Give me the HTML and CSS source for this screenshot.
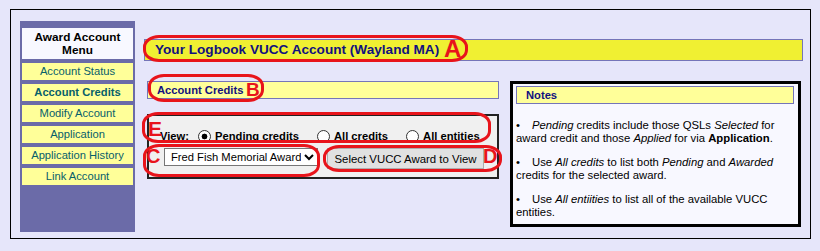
FILE: index.html
```html
<!DOCTYPE html>
<html>
<head>
<meta charset="utf-8">
<title>Logbook VUCC Account</title>
<link rel="stylesheet" href="styles.css">
</head>
<body>
<div class="frame">
  <nav class="sidebar">
    <div class="menu-title">Award Account<br>Menu</div>
    <a class="menu-item">Account Status</a>
    <a class="menu-item current">Account Credits</a>
    <a class="menu-item">Modify Account</a>
    <a class="menu-item">Application</a>
    <a class="menu-item">Application History</a>
    <a class="menu-item">Link Account</a>
  </nav>
  <main class="content">
    <h1 class="page-title">Your Logbook VUCC Account (Wayland MA)</h1>
    <div class="row">
      <div class="left-col">
        <h2 class="section-title">Account Credits</h2>
        <form class="view-form">
          <div class="view-row">
            <span class="view-label">View:</span>
            <label class="opt opt-first"><input type="radio" name="v" checked>Pending credits</label>
            <label class="opt"><input type="radio" name="v">All credits</label>
            <label class="opt"><input type="radio" name="v">All entities</label>
          </div>
          <div class="select-row">
            <select class="award-select"><option>Fred Fish Memorial Award</option></select>
            <button type="button" class="award-btn">Select VUCC Award to View</button>
          </div>
        </form>
      </div>
      <aside class="notes">
        <div class="notes-title">Notes</div>
        <p><span class="bullet">&bull;</span><i>Pending</i> credits include those QSLs <i>Selected</i> for award credit and those <i>Applied</i> for via <b>Application</b>.</p>
        <p><span class="bullet">&bull;</span>Use <i>All credits</i> to list both <i>Pending</i> and <i>Awarded</i> credits for the selected award.</p>
        <p><span class="bullet">&bull;</span>Use <i>All entiities</i> to list all of the available VUCC entities.</p>
      </aside>
    </div>
  </main>
</div>

<div class="mark ring-a"></div><span class="mark letter letter-a">A</span>
<div class="mark ring-b"></div><span class="mark letter letter-b">B</span>
<div class="mark ring-e"></div><span class="mark letter letter-e">E</span>
<div class="mark ring-c"></div><span class="mark letter letter-c">C</span>
<div class="mark ring-d"></div><span class="mark letter letter-d">D</span>
</body>
</html>
```
FILE: styles.css
```css
html, body {
  margin: 0;
  padding: 0;
  background: #e6e6fa;
}
body {
  position: relative;
  width: 820px;
  height: 251px;
  overflow: hidden;
  font-family: "Liberation Sans", Arial, sans-serif;
  font-size: 11px;
  color: #000;
}
.frame {
  box-sizing: border-box;
  width: 801px;
  margin: 9px 0 0 10px;
  border: 1px solid #000;
  padding: 11px 7px 6px 9px;
  display: flex;
  gap: 9px;
  align-items: flex-start;
}
.sidebar {
  box-sizing: border-box;
  width: 115px;
  height: 211px;
  flex: none;
  background: #6b6ba8;
  padding: 7px 2px;
  display: flex;
  flex-direction: column;
  gap: 4px;
}
.menu-title {
  background: #f8f8ff;
  height: 31px;
  box-sizing: border-box;
  padding-top: 3px;
  text-align: center;
  font-weight: bold;
  font-size: 11.8px;
  line-height: 13px;
  color: #000;
}
.menu-item {
  display: block;
  height: 17px;
  line-height: 17px;
  background: #ffff99;
  text-align: center;
  color: #07606b;
  font-size: 11.2px;
}
.menu-item.current { font-weight: bold; }

.content {
  flex: 1;
  padding-top: 18px;
}
.page-title {
  margin: 0;
  box-sizing: border-box;
  height: 22px;
  line-height: 20px;
  background: #f0f032;
  border: 1px solid #7575b8;
  padding-left: 10px;
  font-size: 13.6px;
  font-weight: bold;
  color: #11117f;
}
.row {
  display: flex;
  align-items: flex-start;
  margin-top: 20px;
  padding-left: 3px;
  gap: 11px;
}
.left-col { width: 352px; }
.section-title {
  margin: 0;
  box-sizing: border-box;
  height: 18px;
  line-height: 16px;
  background: #ffff99;
  border: 1px solid #7575b8;
  padding-left: 9px;
  font-size: 11.2px;
  font-weight: bold;
  color: #11117f;
}
.view-form {
  box-sizing: border-box;
  margin: 15px 0 0;
  height: 65px;
  border: 2px solid #222;
  background: #f0f0f0;
  padding-top: 10px;
}
.view-row {
  display: flex;
  align-items: center;
  height: 20px;
  padding-left: 11px;
  font-weight: bold;
  font-size: 11.2px;
}
.opt {
  display: flex;
  align-items: center;
  margin-left: 18px;
}
.opt-first { margin-left: 9px; }
.opt input {
  appearance: none;
  -webkit-appearance: none;
  box-sizing: border-box;
  width: 13px;
  height: 13px;
  margin: 0 4px 0 0;
  border: 1px solid #333;
  border-radius: 50%;
  background: #fff;
}
.opt input:checked {
  background: radial-gradient(circle, #000 0, #000 2.6px, #fff 3.2px);
}
.select-row {
  display: flex;
  align-items: flex-start;
  margin-top: 2px;
  padding-left: 15px;
  gap: 9px;
}
.award-select {
  width: 154px;
  height: 18px;
  font-family: "Liberation Sans", Arial, sans-serif;
  font-size: 11.2px;
  padding: 0 0 0 2px;
  border: 1px solid #767676;
  background: #fff;
  color: #000;
}
.award-btn {
  width: 157px;
  height: 21px;
  font-family: "Liberation Sans", Arial, sans-serif;
  font-size: 11.4px;
  color: #000;
  background: #e1e1e1;
  border: 1px solid #adadad;
  padding: 0;
}
.notes {
  box-sizing: border-box;
  width: 291px;
  height: 146px;
  border: 3px solid #000;
  background: #f8f8ff;
  padding: 2px 4px 0 3px;
}
.notes-title {
  box-sizing: border-box;
  height: 18px;
  line-height: 16px;
  background: #ffff99;
  border: 1px solid #7575b8;
  padding-left: 9px;
  font-weight: bold;
  font-size: 11.2px;
  color: #11117f;
}
.notes p {
  margin: 15px 0 0;
  line-height: 13px;
  font-size: 11.3px;
}
.notes p + p { margin-top: 11px; }
.bullet {
  display: inline-block;
  width: 16px;
}

/* annotation overlays */
.mark { position: absolute; }
.ring-a, .ring-b, .ring-c, .ring-d, .ring-e {
  box-sizing: border-box;
  border: 3px solid #e8141b;
  border-radius: 16px / 12px;
}
.ring-a { left: 143px; top: 35px; width: 325px; height: 27px; }
.ring-b { left: 148px; top: 74px; width: 116px; height: 28px; }
.ring-e { left: 142px; top: 112px; width: 349px; height: 31px; }
.ring-c { left: 143px; top: 144px; width: 177px; height: 33px; }
.ring-d { left: 323px; top: 145px; width: 179px; height: 27px; }
.letter {
  font-family: "Liberation Sans", Arial, sans-serif;
  font-weight: bold;
  color: #e8141b;
  line-height: 1;
}
.letter-a { left: 444px; top: 37px; font-size: 24px; }
.letter-b { left: 246px; top: 80px; font-size: 19px; }
.letter-e { left: 148px; top: 118px; font-size: 21px; }
.letter-c { left: 146px; top: 146px; font-size: 20px; }
.letter-d { left: 483px; top: 146px; font-size: 20px; }
```
